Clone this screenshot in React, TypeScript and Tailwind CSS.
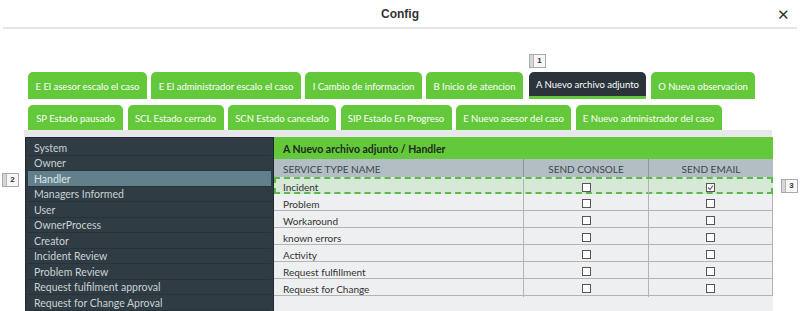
import React from "react";

const GREEN = "bg-[#63c93a]";

const rowOne = [
    { label: "E El asesor escalo el caso", w: "w-[119px]" },
    { label: "E El administrador escalo el caso", w: "w-[150px]" },
    { label: "I Cambio de informacion", w: "w-[117px]" },
    { label: "B Inicio de atencion", w: "w-[97px]" },
    { label: "A Nuevo archivo adjunto", w: "w-[117px]", active: true },
    { label: "O Nueva observacion", w: "w-[104px]" },
];

const rowTwo = [
    { label: "SP Estado pausado", w: "w-[95px]" },
    { label: "SCL Estado cerrado", w: "w-[96px]" },
    { label: "SCN Estado cancelado", w: "w-[108px]" },
    { label: "SIP Estado En Progreso", w: "w-[111px]" },
    { label: "E Nuevo asesor del caso", w: "w-[115px]" },
    { label: "E Nuevo administrador del caso", w: "w-[146px]" },
];

const roles = [
    "System",
    "Owner",
    "Handler",
    "Managers Informed",
    "User",
    "OwnerProcess",
    "Creator",
    "Incident Review",
    "Problem Review",
    "Request fulfilment approval",
    "Request for Change Aproval",
];

const services = [
    { name: "Incident", console: false, email: true, selected: true },
    { name: "Problem", console: false, email: false },
    { name: "Workaround", console: false, email: false },
    { name: "known errors", console: false, email: false },
    { name: "Activity", console: false, email: false },
    { name: "Request fulfillment", console: false, email: false },
    { name: "Request for Change", console: false, email: false },
];

const Marker: React.FC<{ n: number; className: string }> = ({ n, className }) => (
    <div className={`absolute flex h-[14px] w-[17px] border border-[#a9a9a9] bg-[#f7f7f7] ${className}`}>
        <div className="w-[4px] border-r border-[#b5b5b5] bg-[#d6d6d6]" />
        <div className="flex flex-1 items-center justify-center font-['Liberation_Sans',sans-serif] text-[8px] font-bold text-[#333]">
            {n}
        </div>
    </div>
);

const Box: React.FC<{ checked?: boolean }> = ({ checked }) => (
    <div className="flex h-[9px] w-[9px] items-center justify-center border border-[#555] bg-white">
        {checked && (
            <svg width="7" height="7" viewBox="0 0 7 7">
                <path d="M1 3.5 L3 5.5 L6 1.5" fill="none" stroke="#666" strokeWidth="1.2" />
            </svg>
        )}
    </div>
);

const Tab: React.FC<{ label: string; w: string; active?: boolean; h: string }> = ({ label, w, active, h }) => (
    <div
        className={`${w} ${h} flex shrink-0 items-center justify-center rounded-t-[5px] pt-[3px] text-[9.5px] text-white ${
            active ? "border-b-[3px] border-[#63c93a] bg-[#2a343a]" : GREEN
        }`}
    >
        {label}
    </div>
);

export default function App() {
    return (
        <div className="relative h-[311px] w-[800px] overflow-hidden bg-white font-['Lato',sans-serif]">
            <div className="relative mx-[3px] flex h-[29px] items-center justify-center border-b-2 border-[#e2e6e9]">
                <span className="font-['Liberation_Sans',sans-serif] text-[12px] font-bold text-[#333]">Config</span>
                <span className="absolute right-[7px] top-[4px] font-['Liberation_Sans',sans-serif] text-[15px] text-[#333]">✕</span>
            </div>

            <Marker n={1} className="left-[529px] top-[54px]" />
            <Marker n={2} className="left-[2px] top-[173px]" />
            <Marker n={3} className="left-[781px] top-[179px]" />

            <div className="mt-[43px] ml-[28px] flex flex-col gap-[6px]">
                <div className="flex gap-[4px]">
                    {rowOne.map((t, i) => (
                        <div key={t.label} className={i === 4 ? "ml-[2px] mr-[1px]" : ""}>
                            <Tab {...t} h="h-[27px]" />
                        </div>
                    ))}
                </div>
                <div className="flex gap-[4.5px]">
                    {rowTwo.map((t) => (
                        <Tab key={t.label} {...t} h="h-[25px]" />
                    ))}
                </div>
            </div>

            <div className="ml-[24px] h-[7px] w-[748px] bg-[#e6e8ea]" />

            <div className="ml-[25px] flex w-[748px]">
                <div className="h-[180px] w-[249px] border border-[#1f292e] bg-[#2f3c43] px-[2px] pt-[2px]">
                    {roles.map((r) => (
                        <div
                            key={r}
                            className={`flex h-[15.5px] items-center border-b border-[#27333a] pl-[6px] pt-[3px] text-[10.5px] ${
                                r === "Handler" ? "bg-[#62808b] text-[#dfe6e9]" : "text-[#c9d1d5]"
                            }`}
                        >
                            {r}
                        </div>
                    ))}
                </div>
                <div className="flex-1 bg-[#eeeff0]">
                    <div className={`${GREEN} flex h-[22px] items-center pl-[9px] pt-[4px] text-[10.5px] font-bold text-[#1f2a1f]`}>
                        A Nuevo archivo adjunto / Handler
                    </div>
                    <div className="grid h-[18px] grid-cols-[249px_125px_1fr] bg-[#b2bec4] text-[10px] text-[#3d474c]">
                        <div className="flex items-center pl-[9px] pt-[3px]">SERVICE TYPE NAME</div>
                        <div className="flex items-center justify-center border-l border-[#8d979c] pt-[3px]">SEND CONSOLE</div>
                        <div className="flex items-center justify-center border-l border-[#8d979c] pt-[3px]">SEND EMAIL</div>
                    </div>
                    {services.map((s) => (
                        <div
                            key={s.name}
                            className={`grid h-[17px] text-[10px] text-[#333] ${
                                s.selected
                                    ? "grid-cols-[247px_125px_1fr] border-2 border-dashed border-[#5cb94a] bg-[#d5e9d6]"
                                    : "grid-cols-[249px_125px_1fr] border-b border-r border-[#b4b4b4]"
                            }`}
                        >
                            <div className={`flex items-center ${s.selected ? "pl-[7px] pt-[1px]" : "pl-[9px] pt-[3px]"}`}>{s.name}</div>
                            <div className="flex items-center justify-center border-l border-[#b4b4b4]">
                                <Box checked={s.console} />
                            </div>
                            <div className="flex items-center justify-center border-l border-[#b4b4b4]">
                                <Box checked={s.email} />
                            </div>
                        </div>
                    ))}
                </div>
            </div>
        </div>
    );
}
